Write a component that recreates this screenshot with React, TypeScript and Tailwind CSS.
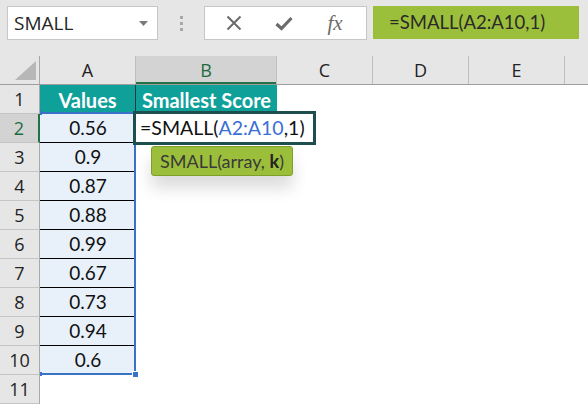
import React from "react";

const cols = [
  { k: "A", w: "w-[96px]" },
  { k: "B", w: "w-[141px]" },
  { k: "C", w: "w-[96px]" },
  { k: "D", w: "w-[96px]" },
  { k: "E", w: "w-[96px]" },
];

const values = ["0.56", "0.9", "0.87", "0.88", "0.99", "0.67", "0.73", "0.94", "0.6"];

const cellFont = { fontFamily: "Lato, 'Open Sans', sans-serif" };
const uiFont = { fontFamily: "'Open Sans', 'Noto Sans', sans-serif" };

export default function App() {
  const rows = Array.from({ length: 11 }, (_, i) => i + 1);
  return (
    <div className="relative w-[588px] h-[405px] overflow-hidden bg-white" style={uiFont}>
      {/* Top bar */}
      <div className="h-[56px] bg-[#e6e6e6] flex items-start pt-[6px]">
        <div className="shrink-0 ml-[7px] w-[151px] h-[34px] bg-white border border-[#c6c6c6] flex items-center justify-between pl-[6px] pr-[9px]">
          <span className="text-[19px] text-[#262626]" style={uiFont}>SMALL</span>
          <svg width="9" height="5" viewBox="0 0 9 5"><path d="M0 0 L9 0 L4.5 5 Z" fill="#7a7a7a" /></svg>
        </div>
        <div className="shrink-0 w-[46px] h-[34px] flex flex-col items-center justify-center gap-[3px]">
          <div className="w-[3px] h-[3px] bg-[#a8a8a8]" />
          <div className="w-[3px] h-[3px] bg-[#a8a8a8]" />
          <div className="w-[3px] h-[3px] bg-[#a8a8a8]" />
        </div>
        <div className="shrink-0 w-[163px] h-[34px] bg-white border border-[#c6c6c6] flex items-center">
          <div className="w-[56px] flex justify-center pl-[2px]">
            <svg width="16" height="16" viewBox="0 0 16 16"><path d="M1.5 1.5 L14.5 14.5 M14.5 1.5 L1.5 14.5" stroke="#6b6b6b" strokeWidth="2" /></svg>
          </div>
          <div className="w-[46px] flex justify-center">
            <svg width="18" height="15" viewBox="0 0 18 15"><path d="M1.5 8 L6.5 12.5 L16.5 2" stroke="#6b6b6b" strokeWidth="3.2" fill="none" strokeLinejoin="miter" /></svg>
          </div>
          <div className="w-[56px] flex justify-center">
            <span className="italic text-[21px] text-[#6b6b6b] leading-none" style={{ fontFamily: "'Liberation Serif', serif" }}>fx</span>
          </div>
        </div>
        <div className="shrink-0 ml-[6px] w-[206px] h-[33px] bg-[#9bbf3a] flex items-center pl-[16px]">
          <span className="text-[18.5px] text-[#2a2a2a]" style={cellFont}>=SMALL(A2:A10,1)</span>
        </div>
      </div>

      {/* Column header */}
      <div className="flex h-[29px] bg-[#e6e6e6] border-b border-[#9e9e9e]">
        <div className="w-[40px] border-r border-[#a8a8a8] relative">
          <svg className="absolute left-[15px] top-[5px]" width="21" height="19" viewBox="0 0 21 19"><path d="M21 0 L21 19 L0 19 Z" fill="#b7b7b7" /></svg>
        </div>
        {cols.map((c) => (
          <div
            key={c.k}
            className={`${c.w} flex items-center justify-center text-[18px] border-r ${c.k === "B" ? "bg-[#d3d3d3] text-[#1e6b41] border-[#c0c0c0] shadow-[inset_0_-2px_0_#217346]" : "text-[#222] border-[#bdbdbd]"}`}
            style={uiFont}
          >
            {c.k}
          </div>
        ))}
        <div className="flex-1" />
      </div>

      {/* Rows */}
      {rows.map((r) => (
        <div key={r} className="flex h-[29px]">
          <div
            className={`w-[40px] flex items-center justify-center text-[18px] border-b border-r ${r === 2 ? "bg-[#d3d3d3] text-[#1e6b41] border-b-[#c4c4c4] border-r-[#217346] border-r-2" : "bg-[#e6e6e6] text-[#222] border-b-[#c4c4c4] border-r-[#a8a8a8]"}`}
            style={uiFont}
          >
            {r}
          </div>
          {r === 1 ? (
            <>
              <div className="w-[96px] bg-[#10a09a] border-r border-[#1b3b3a] flex items-center justify-center text-white font-bold text-[20px]" style={cellFont}>Values</div>
              <div className="w-[141px] bg-[#10a09a] flex items-center justify-center text-white font-bold text-[20px]" style={cellFont}>Smallest Score</div>
            </>
          ) : r <= 10 ? (
            <>
              <div className={`w-[96px] bg-[#e8f0fa] flex items-center justify-center text-[19px] text-[#111] ${r < 10 ? "border-b border-black" : ""}`} style={cellFont}>
                {values[r - 2]}
              </div>
              <div className="w-[141px]" />
            </>
          ) : (
            <>
              <div className="w-[96px]" />
              <div className="w-[141px]" />
            </>
          )}
          <div className="flex-1" />
        </div>
      ))}

      {/* Selection A2:A10 */}
      <div className="absolute left-[40px] top-[112px] w-[96px] h-[263px] border-2 border-l-0 border-[#3a72c8] pointer-events-none" />
      <div className="absolute left-[40px] top-[111px] w-[2px] h-[4px] bg-[#3a72c8]" />
      <div className="absolute left-[40px] top-[372px] w-[2px] h-[4px] bg-[#3a72c8]" />
      <div className="absolute left-[133px] top-[372px] w-[5px] h-[5px] bg-[#3a72c8] border border-white box-content -translate-x-[1px] -translate-y-[1px]" />

      {/* Editing cell B2 */}
      <div className="absolute left-[133px] top-[111px] w-[183px] h-[34px] bg-white border-[3px] border-[#1c4f4d] flex items-center pl-[4px]">
        <span className="text-[19.5px] text-[#111] whitespace-nowrap" style={cellFont}>
          =SMALL(<span className="text-[#3b6fd6]">A2:A10</span>,1)
        </span>
      </div>

      {/* Tooltip */}
      <div className="absolute left-[151px] top-[146px] w-[142px] h-[30px] bg-[#9bbf3a] border border-[#7f9e2c] rounded-[3px] flex items-center justify-center shadow-[0_12px_16px_rgba(0,0,0,0.14)]">
        <span className="text-[18px] text-[#3a3a3a] whitespace-nowrap" style={cellFont}>
          SMALL(array, <b className="text-[#222]">k</b>)
        </span>
      </div>
    </div>
  );
}
